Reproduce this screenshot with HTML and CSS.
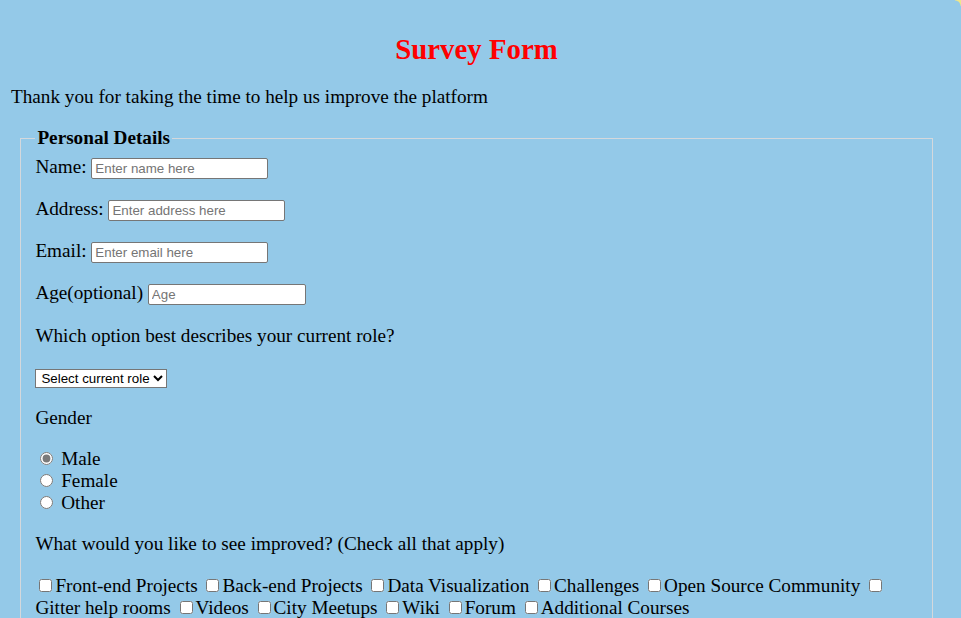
FILE: index.html
```html
<!DOCTYPE html>
<html lang="en">
<head>
<meta charset="utf-8">
<title>Survey Form</title>
<link rel="stylesheet" href="styles.css">
</head>
<body>
<div class="corner"></div>
<h1 id="title" class="title">Survey Form</h1>
<p id="description" class="description">Thank you for taking the time to help us improve the platform</p>
<form id="survey-form" class="survey-form">
  <fieldset class="group">
    <legend class="group-title">Personal Details</legend>
    <div class="field"><label for="name" id="name-label">Name:</label> <input class="text-input" type="text" id="name" placeholder="Enter name here"></div>
    <div class="field"><label for="address">Address:</label> <input class="text-input" type="text" id="address" placeholder="Enter address here"></div>
    <div class="field"><label for="email" id="email-label">Email:</label> <input class="text-input" type="email" id="email" placeholder="Enter email here"></div>
    <div class="field"><label for="number" id="number-label">Age(optional)</label> <input class="text-input number-input" type="number" id="number" placeholder="Age"></div>
    <p class="field">Which option best describes your current role?</p>
    <div class="field"><select class="select" id="dropdown">
      <option>Select current role</option>
      <option>Student</option>
      <option>Full Time Job</option>
      <option>Full Time Learner</option>
      <option>Prefer not to say</option>
      <option>Other</option>
    </select></div>
    <p class="field">Gender</p>
    <div class="field">
      <label class="choice"><input class="radio" type="radio" name="gender" value="male" checked> Male</label><br>
      <label class="choice"><input class="radio" type="radio" name="gender" value="female"> Female</label><br>
      <label class="choice"><input class="radio" type="radio" name="gender" value="other"> Other</label>
    </div>
    <p class="field">What would you like to see improved? (Check all that apply)</p>
    <div class="field checks"><input class="check" type="checkbox" id="c1"><label for="c1">Front-end Projects</label> <input class="check" type="checkbox" id="c2"><label for="c2">Back-end Projects</label> <input class="check" type="checkbox" id="c3"><label for="c3">Data Visualization</label> <input class="check" type="checkbox" id="c4"><label for="c4">Challenges</label> <input class="check" type="checkbox" id="c5"><label for="c5">Open Source Community</label> <input class="check" type="checkbox" id="c6"><label for="c6">Gitter help rooms</label> <input class="check" type="checkbox" id="c7"><label for="c7">Videos</label> <input class="check" type="checkbox" id="c8"><label for="c8">City Meetups</label> <input class="check" type="checkbox" id="c9"><label for="c9">Wiki</label> <input class="check" type="checkbox" id="c10"><label for="c10">Forum</label> <input class="check" type="checkbox" id="c11"><label for="c11">Additional Courses</label></div>
  </fieldset>
</form>
</body>
</html>
```

FILE: styles.css
```css
html {
  background: #94c9e8;
}

body {
  margin: 0 18px 0 10px;
  padding: 0;
  background: #94c9e8;
  color: #000;
  font-family: "Liberation Serif", "Times New Roman", serif;
  font-size: 19.2px;
}

.corner {
  position: fixed;
  top: 0;
  right: 0;
  width: 6px;
  height: 6px;
  background: radial-gradient(circle at 0 100%, transparent 5px, #efe68a 6px);
}

.title {
  color: #ff0000;
  text-align: center;
  font-size: 28.8px;
  font-weight: bold;
  margin: 33px 0 20px;
}

.description {
  margin: 0 0 19.2px;
  padding-left: 1px;
}

.survey-form {
  margin: 0;
}

.group {
  margin: 0 10px;
  padding: 6.7px 14.4px 12px;
  border: 1px solid #d4d8dc;
}

.group-title {
  font-weight: bold;
  padding: 0 2px;
}

.field {
  margin: 0 0 19.2px;
}

.text-input {
  box-sizing: border-box;
  width: 177px;
  height: 21px;
  padding: 1px 3px;
  border: 1px solid #767676;
  border-radius: 2px;
  background: #fff;
  font-family: Arial, "Liberation Sans", sans-serif;
  font-size: 13.33px;
  color: #000;
}

.number-input {
  width: 158px;
}

.text-input::placeholder {
  color: #757575;
}

.select {
  box-sizing: border-box;
  width: 132px;
  height: 19px;
  padding: 0 0 0 1px;
  border: 1px solid #767676;
  border-radius: 0;
  background: #fff;
  font-family: Arial, "Liberation Sans", sans-serif;
  font-size: 13.33px;
  color: #000;
}

.radio {
  accent-color: #7a7a7a;
}

.check {
  margin: 3px 3px 3px 4px;
}
```
